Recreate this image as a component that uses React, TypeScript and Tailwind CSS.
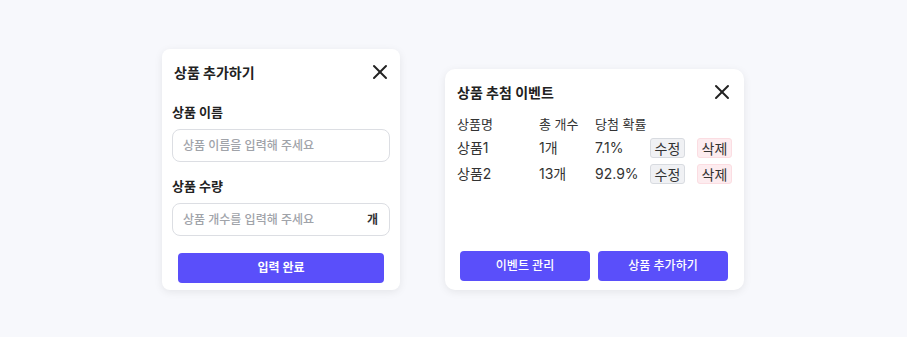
import { X } from "lucide-react";

const font = { fontFamily: 'Inter, "Noto Sans CJK KR", "Noto Sans", sans-serif' };

const rows = [
  { name: "상품1", count: "1개", rate: "7.1%" },
  { name: "상품2", count: "13개", rate: "92.9%" },
];

const AddProductCard = () => {
  return (
    <div className="w-[238px] h-[241px] bg-white rounded-[8px] shadow-[0_2px_8px_rgba(0,0,0,0.08)] flex flex-col px-[10px]">
      <div className="flex items-center justify-between h-[46px] pl-[2px] pr-[2px]">
        <span className="text-[14px] font-bold text-[#222]">상품 추가하기</span>
        <X size={24} strokeWidth={2} className="text-[#222] -mr-[4px]" />
      </div>

      <div className="mt-[8px] text-[13px] font-bold text-[#222] leading-[18px]">상품 이름</div>
      <div className="mt-[8px] h-[33px] rounded-[8px] border border-[#dcdee3] flex items-center px-[10px]">
        <span className="text-[12px] font-medium text-[#a0a3a9]">상품 이름을 입력해 주세요</span>
      </div>

      <div className="mt-[15px] text-[13px] font-bold text-[#222] leading-[18px]">상품 수량</div>
      <div className="mt-[8px] h-[33px] rounded-[8px] border border-[#dcdee3] flex items-center justify-between px-[10px]">
        <span className="text-[12px] font-medium text-[#a0a3a9]">상품 개수를 입력해 주세요</span>
        <span className="text-[12px] font-bold text-[#333] pr-[1px]">개</span>
      </div>

      <div className="mt-[17px] mx-[6px] h-[30px] rounded-[4px] bg-[#5a4ffa] flex items-center justify-center">
        <span className="text-[12px] font-bold text-white">입력 완료</span>
      </div>
    </div>
  );
};

const EventCard = () => {
  return (
    <div className="w-[299px] h-[221px] bg-white rounded-[10px] shadow-[0_2px_8px_rgba(0,0,0,0.08)] flex flex-col px-[12px]">
      <div className="flex items-center justify-between h-[46px] pr-[2px]">
        <span className="text-[14px] font-bold text-[#222]">상품 추첨 이벤트</span>
        <X size={24} strokeWidth={2} className="text-[#222] -mr-[4px]" />
      </div>

      <div className="flex text-[13px] text-[#333] mt-[1px] h-[18px] items-center">
        <span className="w-[82px]">상품명</span>
        <span className="w-[56px]">총 개수</span>
        <span>당첨 확률</span>
      </div>

      <div className="flex flex-col gap-[6px] mt-[3px]">
        {rows.map((r) => (
          <div key={r.name} className="flex items-center h-[20px] text-[14px] text-[#333]">
            <span className="w-[82px]">{r.name}</span>
            <span className="w-[56px]">{r.count}</span>
            <span className="w-[55px]">{r.rate}</span>
            <span className="w-[35px] h-[20px] mt-[2px] rounded-[3px] bg-[#f0f1f4] border border-[#d8dbe0] flex items-center justify-center text-[14px] text-[#333]">
              수정
            </span>
            <span className="ml-[12px] w-[35px] h-[20px] mt-[2px] rounded-[3px] bg-[#fdecef] border border-[#fbdde2] flex items-center justify-center text-[14px] text-[#333]">
              삭제
            </span>
          </div>
        ))}
      </div>

      <div className="mt-auto mb-[9px] flex gap-[8px] px-[3px]">
        <div className="w-[130px] h-[30px] rounded-[4px] bg-[#5a4ffa] flex items-center justify-center">
          <span className="text-[12px] font-medium text-white">이벤트 관리</span>
        </div>
        <div className="w-[130px] h-[30px] rounded-[4px] bg-[#5a4ffa] flex items-center justify-center">
          <span className="text-[12px] font-medium text-white">상품 추가하기</span>
        </div>
      </div>
    </div>
  );
};

export default function App() {
  return (
    <div style={font} className="w-full h-[337px] bg-[#f7f8fc] flex items-end justify-center gap-[45px] pb-[47px] pr-[1px]">
      <AddProductCard />
      <EventCard />
    </div>
  );
}
